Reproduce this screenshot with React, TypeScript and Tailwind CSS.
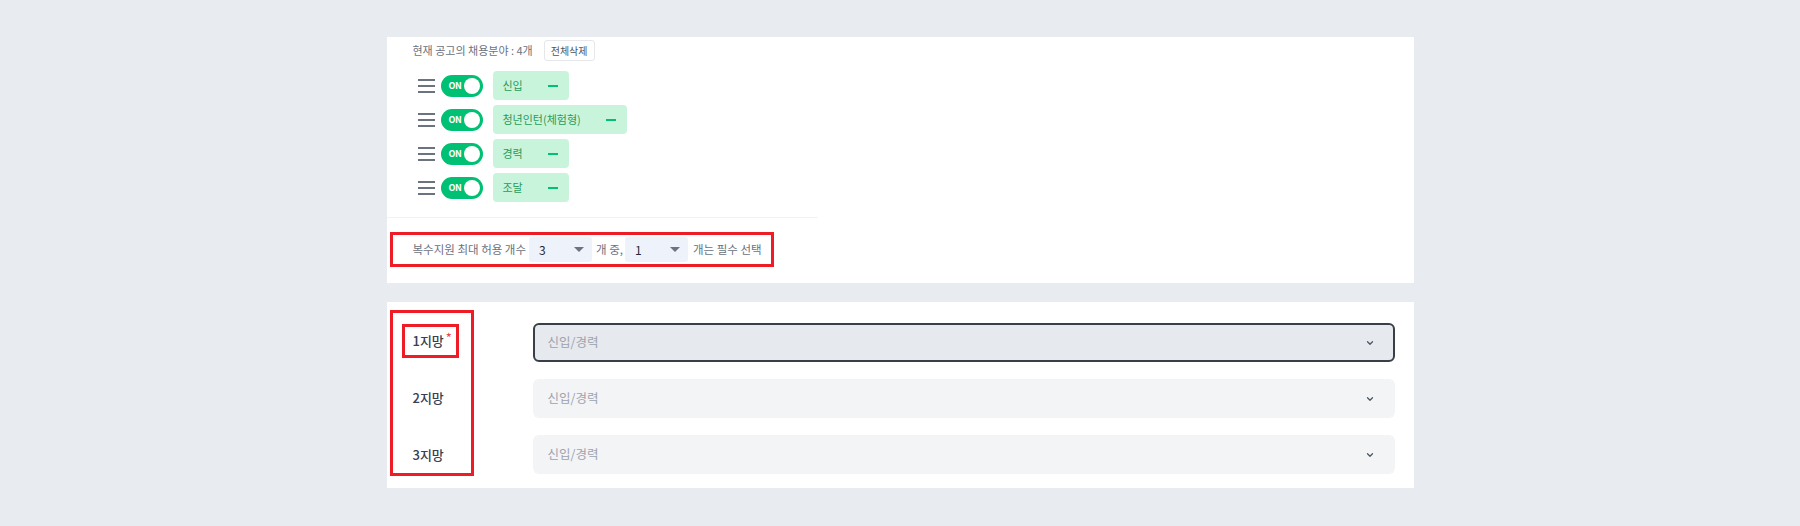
import { ChevronDown } from "lucide-react";

const FIELDS = ["신입", "청년인턴(체험형)", "경력", "조달"];
const RANKS = ["1지망", "2지망", "3지망"];

function Hamburger() {
  return (
    <div className="flex w-[17px] flex-col gap-[4px]">
      <span className="h-[2px] w-full bg-[#6b7280]" />
      <span className="h-[2px] w-full bg-[#6b7280]" />
      <span className="h-[2px] w-full bg-[#6b7280]" />
    </div>
  );
}

function Toggle() {
  return (
    <div className="flex h-[22px] w-[42px] items-center justify-between rounded-full bg-[#00c073] pl-[8px] pr-[3px]">
      <span className="text-[9px] font-bold leading-none tracking-tighter text-white">ON</span>
      <span className="h-[16px] w-[16px] rounded-full bg-white" />
    </div>
  );
}

function FieldRow({ name }: { name: string }) {
  return (
    <div className="flex items-center">
      <Hamburger />
      <div className="ml-[6px]">
        <Toggle />
      </div>
      <div className="ml-[10px] flex h-[29px] items-center gap-[25px] rounded-[4px] bg-[#c9f4dc] pl-[10px] pr-[11px]">
        <span className="text-[11px] text-[#2a9a5a]">{name}</span>
        <span className="h-[2px] w-[10px] bg-[#00c073]" />
      </div>
    </div>
  );
}

function MiniSelect({ value }: { value: string }) {
  return (
    <div className="flex h-[25px] w-[63px] items-center justify-between rounded-[3px] bg-[#eef2fa] pl-[10px] pr-[8px]">
      <span className="text-[12px] text-[#1f2937]">{value}</span>
      <span className="h-0 w-0 border-x-[5px] border-t-[5px] border-x-transparent border-t-[#6b7280]" />
    </div>
  );
}

export default function App() {
  return (
    <div className="min-h-screen bg-[#e8ebef] pt-[37px] font-['Noto_Sans_CJK_KR','Noto_Sans',sans-serif]">
      <div className="mx-auto w-[1027px]">
        {/* 채용분야 panel */}
        <section className="h-[246px] bg-white pt-[3px]">
          <div className="flex h-[21px] items-center gap-[11px] pl-[26px]">
            <span className="text-[11px] text-[#6b7280]">현재 공고의 채용분야 : 4개</span>
            <button className="h-[21px] rounded-[3px] border border-[#e5e7eb] px-[6px] text-[10px] font-normal text-[#4b5563]">
              전체삭제
            </button>
          </div>

          <div className="mt-[10px] flex flex-col gap-[5px] pl-[31px]">
            {FIELDS.map((f) => (
              <FieldRow key={f} name={f} />
            ))}
          </div>

          <div className="mt-[15px] h-px w-[431px] bg-[#f0f2f4]" />

          <div className="ml-[3px] mt-[14px] flex h-[35px] w-[384px] items-center border-[3px] border-[#ee1c25] pl-[20px] text-[11.5px] text-[#6b7280]">
            <span>복수지원 최대 허용 개수</span>
            <div className="ml-[3px]">
              <MiniSelect value="3" />
            </div>
            <span className="ml-[4px]">개 중,</span>
            <div className="ml-[2px]">
              <MiniSelect value="1" />
            </div>
            <span className="ml-[5px]">개는 필수 선택</span>
          </div>
        </section>

        {/* 지망 panel */}
        <section className="mt-[19px] flex h-[186px] bg-white">
          <div className="ml-[3px] mt-[8px] h-[166px] w-[84px] border-[3px] border-[#ee1c25]">
            <div className="flex flex-col gap-[23px] pt-[11px]">
              <div className="ml-[9px] flex h-[34px] w-[57px] items-center border-[3px] border-[#ee1c25] pl-[8px]">
                <span className="text-[13px] font-medium text-[#374151]">1지망</span>
                <span className="-mt-[8px] ml-[2px] text-[13px] leading-none text-[#f04444]">*</span>
              </div>
              {RANKS.slice(1).map((r) => (
                <div key={r} className="flex h-[34px] items-center pl-[20px]">
                  <span className="text-[13px] font-medium text-[#374151]">{r}</span>
                </div>
              ))}
            </div>
          </div>

          <div className="ml-[59px] flex flex-1 flex-col gap-[17px] pr-[19px] pt-[21px]">
            {RANKS.map((r, i) => (
              <div
                key={r}
                className={
                  i === 0
                    ? "flex h-[39px] items-center justify-between rounded-[6px] border-2 border-[#3a3f47] bg-[#e6e9ed] pl-[13px] pr-[18px]"
                    : "flex h-[39px] items-center justify-between rounded-[6px] bg-[#f3f4f6] pl-[15px] pr-[20px]"
                }
              >
                <span className="text-[12.5px] text-[#9ca3af]">신입/경력</span>
                <ChevronDown className="h-[10px] w-[10px] text-[#4b5563]" strokeWidth={3} />
              </div>
            ))}
          </div>
        </section>
      </div>
    </div>
  );
}
